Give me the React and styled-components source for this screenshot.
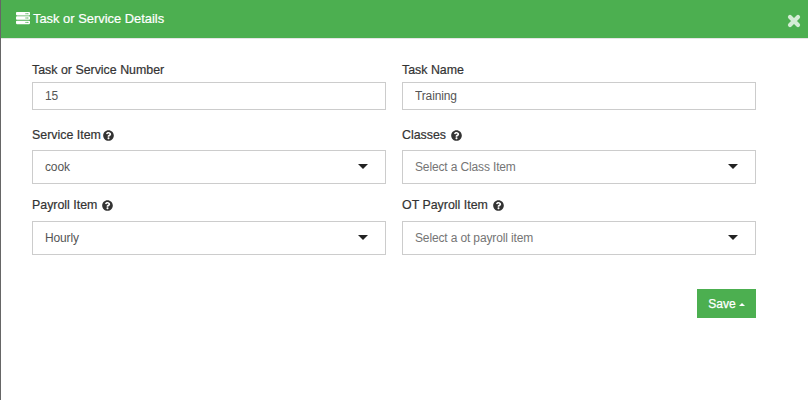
import React from "react";
import styled, { createGlobalStyle } from "styled-components";
import { FaServer, FaQuestionCircle } from "react-icons/fa";

const Global = createGlobalStyle`
  html, body { margin: 0; padding: 0; background: #fff; }
  body { font-family: "Liberation Sans", Arial, sans-serif; }
`;

const Modal = styled.div`
  width: 808px;
  height: 400px;
  box-sizing: border-box;
  border-left: 1px solid #666;
  background: #fff;
  overflow: hidden;
`;

const Header = styled.header`
  height: 39px;
  box-sizing: border-box;
  background: #4caf50;
  border-bottom: 1px solid #e5e5e5;
  display: flex;
  justify-content: space-between;
  padding: 0 7px 0 15px;
  color: #fff;
`;

const Title = styled.h4`
  margin: 0;
  height: 36px;
  display: flex;
  align-items: center;
  gap: 3px;
  font-size: 12.9px;
  font-weight: 400;
  -webkit-text-stroke: 0.2px #fff;
`;

const Close = styled.svg`
  width: 14px;
  height: 14px;
  margin-top: 14px;
  stroke: #d4ecd5;
  stroke-width: 4.2;
  stroke-linecap: round;
`;

const Form = styled.form`
  padding: 24px 51px 0 31px;
`;

const Grid = styled.div`
  display: grid;
  grid-template-columns: 354px 354px;
  column-gap: 16px;
`;

const Field = styled.div`
  height: ${(p) => p.$h}px;
`;

const Label = styled.label`
  display: flex;
  align-items: center;
  gap: ${(p) => p.$gap ?? 6}px;
  height: 14px;
  margin-bottom: ${(p) => p.$mb}px;
  font-size: 12.4px;
  color: #333;
  -webkit-text-stroke: 0.2px #333;
`;

const Help = styled(FaQuestionCircle)`
  font-size: 11px;
  color: #333;
  flex: none;
`;

const Input = styled.input`
  display: block;
  width: 100%;
  height: 28px;
  box-sizing: border-box;
  border: 1px solid #ccc;
  padding: 0 12px 1px;
  font: 12px "Liberation Sans", Arial, sans-serif;
  letter-spacing: -0.14px;
  color: #555;
  background: #fff;
  outline: none;
`;

const Select = styled.div`
  height: 34px;
  box-sizing: border-box;
  border: 1px solid #ccc;
  padding: 0 17px 1px 12px;
  display: flex;
  align-items: center;
  justify-content: space-between;
  font-size: 12px;
  letter-spacing: -0.14px;
  color: ${(p) => (p.$placeholder ? "#757575" : "#555")};
  background: #fff;
`;

const Caret = styled.span`
  width: 0;
  height: 0;
  border-left: 5.5px solid transparent;
  border-right: 5.5px solid transparent;
  border-top: 5.5px solid #222;
`;

const Actions = styled.div`
  display: flex;
  justify-content: flex-end;
  margin-top: 23px;
  padding-right: 1px;
`;

const Save = styled.button`
  width: 59px;
  height: 29px;
  border: 0;
  padding: 0;
  background: #4caf50;
  color: #fff;
  font: 12px "Liberation Sans", Arial, sans-serif;
  -webkit-text-stroke: 0.25px #fff;
  display: flex;
  align-items: center;
  justify-content: center;
  gap: 3px;
`;

const SaveCaret = styled.span`
  width: 0;
  height: 0;
  margin-top: 2px;
  border-left: 3px solid transparent;
  border-right: 3px solid transparent;
  border-bottom: 3px solid #fff;
`;

function SelectField({ label, value, placeholder, gap, mb, h }) {
  return (
    <Field $h={h}>
      <Label $mb={mb} $gap={gap}>
        {label} <Help />
      </Label>
      <Select $placeholder={placeholder}>
        {value}
        <Caret />
      </Select>
    </Field>
  );
}

export default function App() {
  return (
    <Modal>
      <Global />
      <Header>
        <Title>
          <FaServer size={14} /> Task or Service Details
        </Title>
        <Close viewBox="0 0 14 14" aria-hidden="true">
          <path d="M3 3 L11 11 M11 3 L3 11" />
        </Close>
      </Header>
      <Form>
        <Grid>
          <Field $h={65}>
            <Label $mb={5}>Task or Service Number</Label>
            <Input defaultValue="15" />
          </Field>
          <Field $h={65}>
            <Label $mb={5}>Task Name</Label>
            <Input defaultValue="Training" />
          </Field>
          <SelectField h={70} mb={8} gap={2} label="Service Item" value="cook" />
          <SelectField h={70} mb={8} gap={5} label="Classes" value="Select a Class Item" placeholder />
          <SelectField h={68} mb={9} gap={5} label="Payroll Item" value="Hourly" />
          <SelectField h={68} mb={9} gap={5} label="OT Payroll Item" value="Select a ot payroll item" placeholder />
        </Grid>
        <Actions>
          <Save type="button">
            Save <SaveCaret />
          </Save>
        </Actions>
      </Form>
    </Modal>
  );
}
